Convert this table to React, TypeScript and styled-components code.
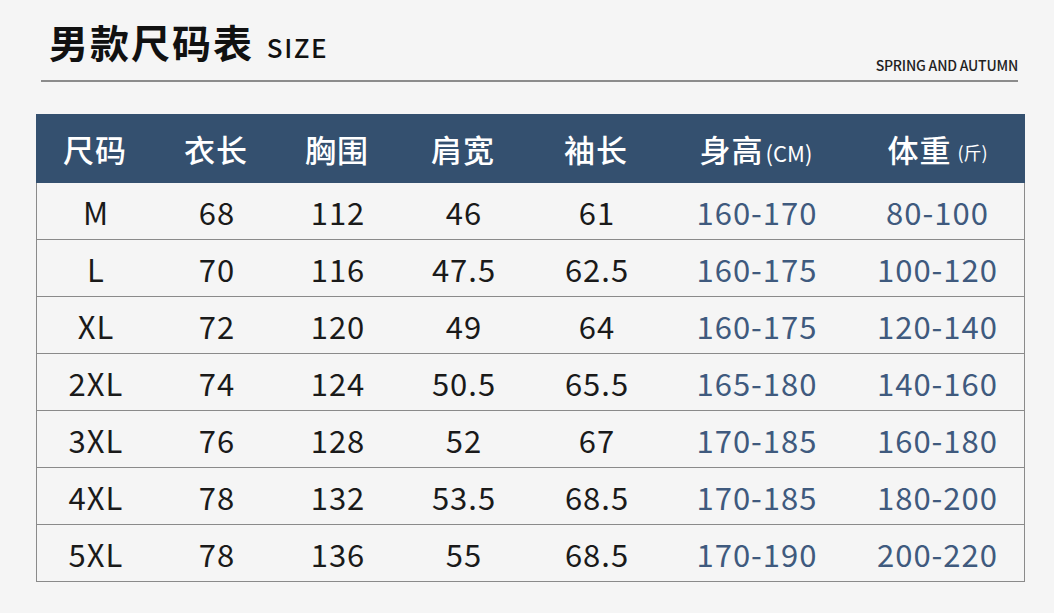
import React from "react";
import styled, { createGlobalStyle } from "styled-components";

const GlobalStyle = createGlobalStyle`
	html, body {
		margin: 0;
		padding: 0;
		background: #f5f5f5;
	}
	body {
		font-family: "Noto Sans CJK SC", "Noto Sans", sans-serif;
	}
`;

const columns = "118px 124px 118px 134px 132px 188px 1fr";

const rows = [
	["M", "68", "112", "46", "61", "160-170", "80-100"],
	["L", "70", "116", "47.5", "62.5", "160-175", "100-120"],
	["XL", "72", "120", "49", "64", "160-175", "120-140"],
	["2XL", "74", "124", "50.5", "65.5", "165-180", "140-160"],
	["3XL", "76", "128", "52", "67", "170-185", "160-180"],
	["4XL", "78", "132", "53.5", "68.5", "170-185", "180-200"],
	["5XL", "78", "136", "55", "68.5", "170-190", "200-220"],
];

function App() {
	return (
		<Page>
			<GlobalStyle />
			<TitleBar>
				<Title>
					男款尺码表 <small>SIZE</small>
				</Title>
				<Season>SPRING AND AUTUMN</Season>
			</TitleBar>
			<Table>
				<HeadRow>
					<HeadCell>尺码</HeadCell>
					<HeadCell>衣长</HeadCell>
					<HeadCell>胸围</HeadCell>
					<HeadCell>肩宽</HeadCell>
					<HeadCell>袖长</HeadCell>
					<HeadCell>
						身高<Unit>(CM)</Unit>
					</HeadCell>
					<HeadCell>
						体重<Unit $small>(斤)</Unit>
					</HeadCell>
				</HeadRow>
				{rows.map((r) => (
					<Row key={r[0]}>
						{r.map((v, i) => (
							<Cell key={i} $blue={i >= 5}>
								{v}
							</Cell>
						))}
					</Row>
				))}
			</Table>
		</Page>
	);
}

export default App;

const Page = styled.div`
	width: 1054px;
	height: 613px;
	padding-top: 13px;
	box-sizing: border-box;
`;

const TitleBar = styled.div`
	margin: 0 36px 0 41px;
	padding: 0 0 5px 8px;
	display: flex;
	justify-content: space-between;
	align-items: flex-end;
	border-bottom: 2px solid #8c8c8c;
`;

const Title = styled.h1`
	margin: 0;
	font-size: 39px;
	font-weight: 700;
	letter-spacing: 2px;
	line-height: 56px;
	color: #111;
	small {
		font-size: 26px;
		font-weight: 500;
		letter-spacing: 1.5px;
		margin-left: 2px;
	}
`;

const Season = styled.span`
	font-size: 14px;
	font-weight: 500;
	color: #222;
	letter-spacing: -0.2px;
	line-height: 16px;
	margin-bottom: 2px;
`;

const Table = styled.div`
	margin: 32px 29px 0 36px;
	border: 1px solid #8a8a8a;
	border-top: none;
`;

const HeadRow = styled.div`
	display: grid;
	grid-template-columns: ${columns};
	height: 69px;
	background: #34506f;
	margin: 0 -1px;
`;

const HeadCell = styled.div`
	display: flex;
	align-items: center;
	justify-content: center;
	color: #fff;
	font-size: 31px;
	font-weight: 500;
	letter-spacing: 1px;
`;

const Unit = styled.span<{ $small?: boolean }>`
	font-size: ${(p) => (p.$small ? "18px" : "22px")};
	font-weight: 400;
	letter-spacing: 0;
	margin-left: ${(p) => (p.$small ? "6px" : "2px")};
	margin-top: 6px;
`;

const Row = styled.div`
	display: grid;
	grid-template-columns: ${columns};
	height: 56px;
	& + & {
		border-top: 1px solid #8a8a8a;
	}
`;

const Cell = styled.div<{ $blue?: boolean }>`
	display: flex;
	align-items: center;
	justify-content: center;
	font-size: 31px;
	font-weight: 400;
	letter-spacing: 1px;
	color: ${(p) => (p.$blue ? "#3f5a7e" : "#1a1a1a")};
`;
